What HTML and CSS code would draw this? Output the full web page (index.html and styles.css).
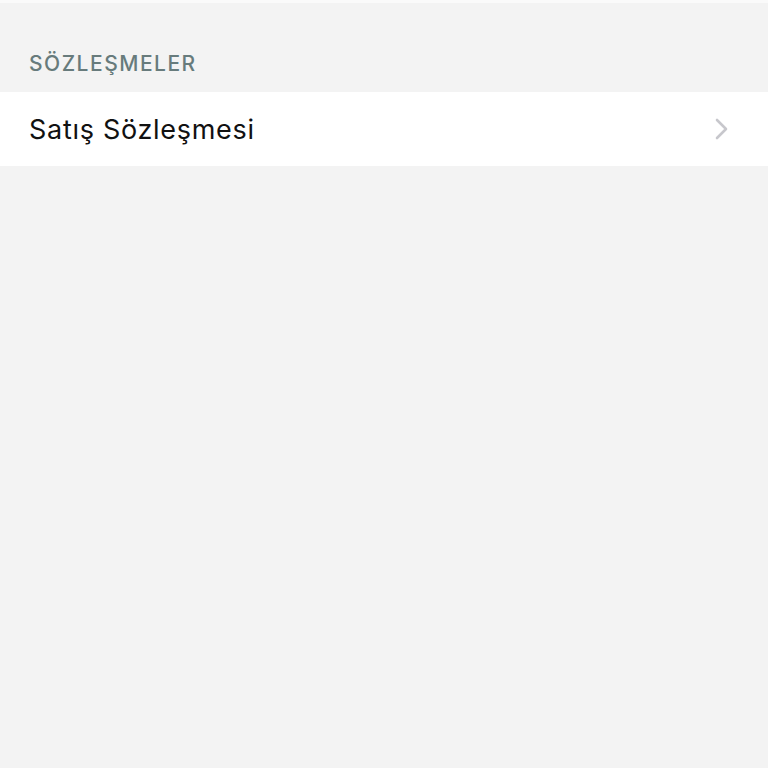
FILE: index.html
```html
<!DOCTYPE html>
<html lang="tr">
<head>
  <meta charset="UTF-8">
  <meta name="viewport" content="width=device-width, initial-scale=1.0">
  <title>Sözleşmeler</title>
  <link rel="stylesheet" href="styles.css">
</head>
<body>
  <div class="screen">
    <!-- Section -->
    <div class="section">
      <h2 class="section-title">SÖZLEŞMELER</h2>
      <div class="list">
        <a class="row" href="#">
          <span class="row-label">Satış Sözleşmesi</span>
          <svg class="chevron" width="14" height="22" viewBox="0 0 14 22" fill="none">
            <path d="M2 2l9 9-9 9" stroke="#c7c7cc" stroke-width="2.6" stroke-linecap="round" stroke-linejoin="round"/>
          </svg>
        </a>
      </div>
    </div>
  </div>
</body>
</html>
```

FILE: styles.css
```css
:root {
  --bg: #f3f3f3;
  --row-bg: #ffffff;
  --header-color: #677b7c;
  --text-color: #111111;
  --font-family: "Inter", "Liberation Sans", sans-serif;
}
* { box-sizing: border-box; margin: 0; padding: 0; }
html, body { height: 100%; }
body { font-family: var(--font-family); background-color: var(--bg); color: var(--text-color); border-top: 3px solid #fafafa; }
.screen { padding-top: 49px; }
.section-title { font-size: 21px; font-weight: 500; color: var(--header-color); letter-spacing: 1.5px; padding: 0 29px; height: 40px; line-height: 24px; }
.list { background-color: var(--row-bg); }
.row { display: flex; align-items: center; justify-content: space-between; height: 74px; padding: 0 39px 0 29px; text-decoration: none; color: var(--text-color); }
.row-label { font-size: 27px; font-weight: 400; letter-spacing: 0.7px; }
.chevron { display: block; }
```
